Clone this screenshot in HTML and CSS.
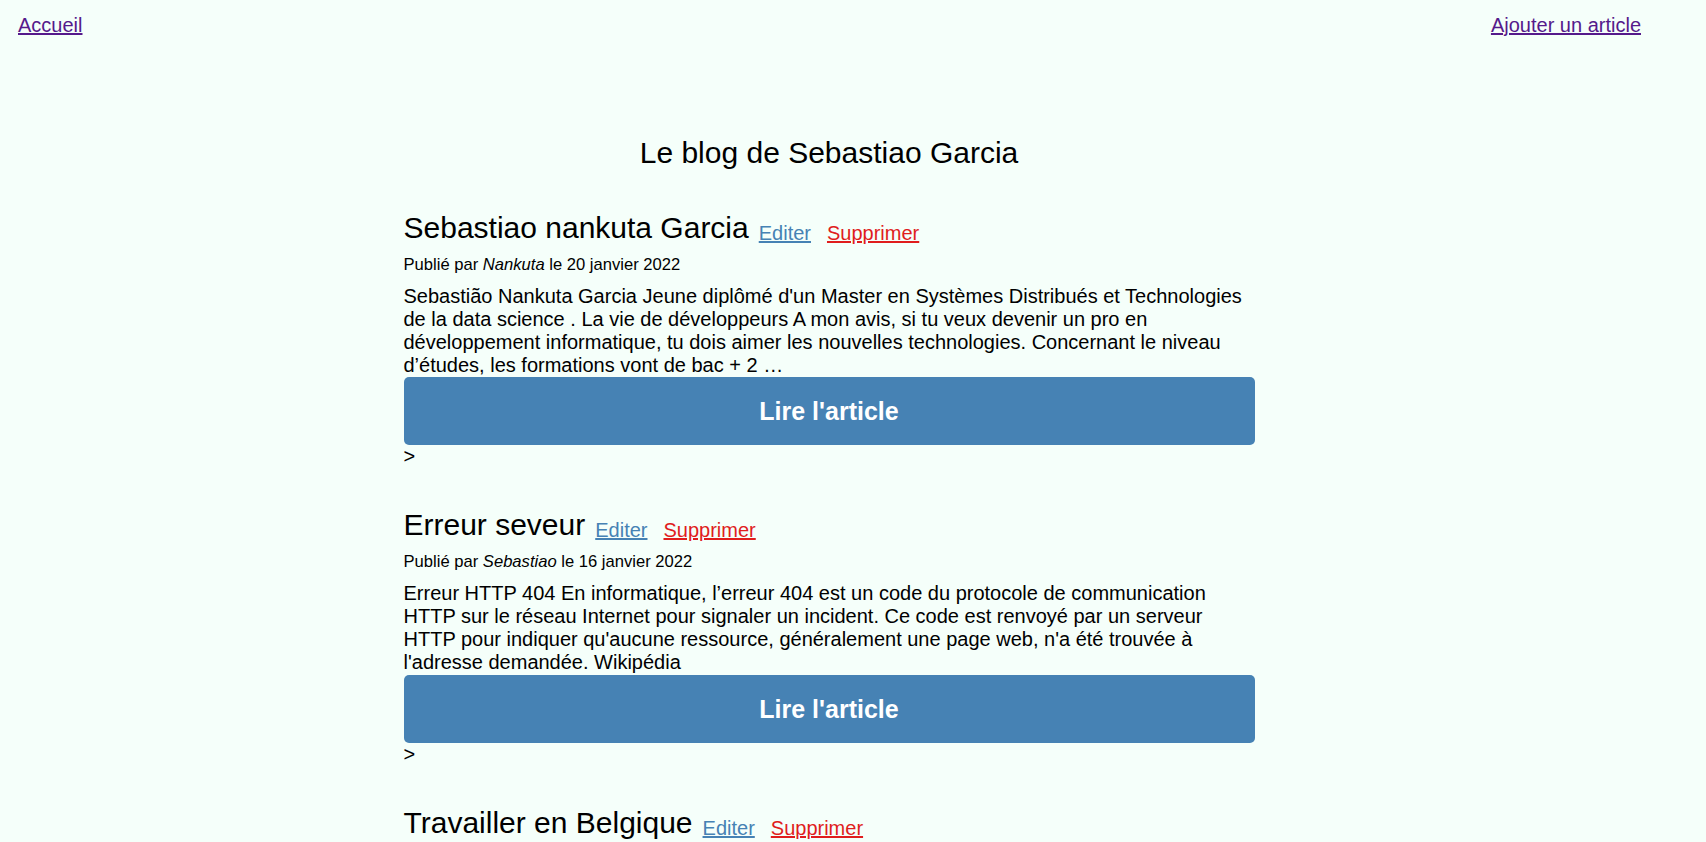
FILE: index.html
```html
<!DOCTYPE html>
<html lang="fr">
<head>
<meta charset="utf-8">
<title>Le blog de Sebastiao Garcia</title>
<link rel="stylesheet" href="styles.css">
</head>
<body>
<nav class="nav">
  <a class="nav-link" href="#">Accueil</a>
  <a class="nav-link" href="#">Ajouter un article</a>
</nav>
<main class="main">
  <h1 class="title">Le blog de Sebastiao Garcia</h1>

  <article class="post">
    <div class="post-head">
      <h2 class="post-title">Sebastiao nankuta Garcia</h2>
      <a class="edit" href="#">Editer</a>
      <a class="delete" href="#">Supprimer</a>
    </div>
    <p class="meta">Publié par <em>Nankuta</em> le 20 janvier 2022</p>
    <p class="excerpt">Sebastião Nankuta Garcia Jeune diplômé d'un Master en Systèmes Distribués et Technologies de la data science . La vie de développeurs A mon avis, si tu veux devenir un pro en développement informatique, tu dois aimer les nouvelles technologies. Concernant le niveau d’études, les formations vont de bac + 2 …</p>
    <a class="read" href="#">Lire l'article</a>
    <div class="gt">&gt;</div>
  </article>

  <article class="post">
    <div class="post-head">
      <h2 class="post-title">Erreur seveur</h2>
      <a class="edit" href="#">Editer</a>
      <a class="delete" href="#">Supprimer</a>
    </div>
    <p class="meta">Publié par <em>Sebastiao</em> le 16 janvier 2022</p>
    <p class="excerpt">Erreur HTTP 404 En informatique, l’erreur 404 est un code du protocole de communication HTTP sur le réseau Internet pour signaler un incident. Ce code est renvoyé par un serveur HTTP pour indiquer qu'aucune ressource, généralement une page web, n'a été trouvée à l'adresse demandée. Wikipédia</p>
    <a class="read" href="#">Lire l'article</a>
    <div class="gt">&gt;</div>
  </article>

  <article class="post">
    <div class="post-head">
      <h2 class="post-title">Travailler en Belgique</h2>
      <a class="edit" href="#">Editer</a>
      <a class="delete" href="#">Supprimer</a>
    </div>
  </article>
</main>
</body>
</html>
```
FILE: styles.css
```css
html, body {
  margin: 0;
  padding: 0;
}

body {
  background: #f5fffa;
  color: #000;
  font-family: "Liberation Sans", Arial, sans-serif;
  padding-right: 48px;
}

.nav {
  display: flex;
  justify-content: space-between;
  padding: 14px 17px 0 18px;
  font-size: 20px;
  line-height: normal;
}

.nav-link {
  color: #551a8b;
}

.main {
  width: 851px;
  margin: 0 auto;
}

.title {
  margin: 99px 0 0;
  font-size: 30px;
  font-weight: normal;
  line-height: normal;
  text-align: center;
}

.post {
  margin-top: 40px;
}

.title + .post {
  margin-top: 40.5px;
}

.post-head {
  display: flex;
  align-items: flex-end;
}

.post-title {
  margin: 0;
  font-size: 30px;
  font-weight: normal;
  line-height: normal;
}

.edit,
.delete {
  font-size: 20px;
  line-height: normal;
}

.edit {
  color: #4682b4;
  margin-left: 10px;
}

.delete {
  color: #e01d1d;
  margin-left: 16px;
}

.meta {
  margin: 10px 0 0;
  font-size: 16.6px;
  line-height: normal;
}

.excerpt {
  margin: 10px 0 0;
  font-size: 20px;
  line-height: normal;
}

.read {
  display: block;
  margin-top: 0.5px;
  height: 68px;
  line-height: 68px;
  background: #4682b4;
  border-radius: 5px;
  color: #fff;
  font-size: 25px;
  font-weight: bold;
  text-align: center;
  text-decoration: none;
}

.gt {
  font-size: 20px;
  line-height: normal;
}
```
